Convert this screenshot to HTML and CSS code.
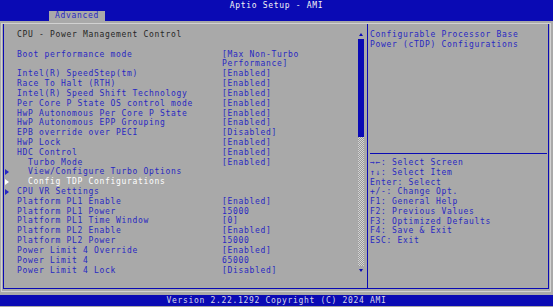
FILE: index.html
```html
<!DOCTYPE html>
<html lang="en">
<head>
    <meta charset="UTF-8">
    <title>Aptio Setup - AMI</title>
    <link rel="stylesheet" href="styles.css">
</head>
<body>
    <header class="top">
        <div class="title">Aptio Setup - AMI</div>
        <div class="tabs"><span class="tab">Advanced</span></div>
    </header>

    <div class="frame">
        <div class="inner">
            <div class="left">
                <div class="list">
                    <div class="row"><span></span><span class="heading">CPU - Power Management Control</span></div>
                    <div class="row"><span></span><span>&nbsp;</span></div>
                    <div class="row"><span></span><span>Boot performance mode</span><span>[Max Non-Turbo<br>Performance]</span></div>
                    <div class="row"><span></span><span>Intel(R) SpeedStep(tm)</span><span>[Enabled]</span></div>
                    <div class="row"><span></span><span>Race To Halt (RTH)</span><span>[Enabled]</span></div>
                    <div class="row"><span></span><span>Intel(R) Speed Shift Technology</span><span>[Enabled]</span></div>
                    <div class="row"><span></span><span>Per Core P State OS control mode</span><span>[Enabled]</span></div>
                    <div class="row"><span></span><span>HwP Autonomous Per Core P State</span><span>[Enabled]</span></div>
                    <div class="row"><span></span><span>HwP Autonomous EPP Grouping</span><span>[Enabled]</span></div>
                    <div class="row"><span></span><span>EPB override over PECI</span><span>[Disabled]</span></div>
                    <div class="row"><span></span><span>HwP Lock</span><span>[Enabled]</span></div>
                    <div class="row"><span></span><span>HDC Control</span><span>[Enabled]</span></div>
                    <div class="row"><span></span><span class="indent">Turbo Mode</span><span>[Enabled]</span></div>
                    <div class="row"><span class="arrow"></span><span class="indent">View/Configure Turbo Options</span></div>
                    <div class="row selected"><span class="arrow"></span><span class="indent">Config TDP Configurations</span></div>
                    <div class="row"><span class="arrow"></span><span>CPU VR Settings</span></div>
                    <div class="row"><span></span><span>Platform PL1 Enable</span><span>[Enabled]</span></div>
                    <div class="row"><span></span><span>Platform PL1 Power</span><span>15000</span></div>
                    <div class="row"><span></span><span>Platform PL1 Time Window</span><span>[0]</span></div>
                    <div class="row"><span></span><span>Platform PL2 Enable</span><span>[Enabled]</span></div>
                    <div class="row"><span></span><span>Platform PL2 Power</span><span>15000</span></div>
                    <div class="row"><span></span><span>Power Limit 4 Override</span><span>[Enabled]</span></div>
                    <div class="row"><span></span><span>Power Limit 4</span><span>65000</span></div>
                    <div class="row"><span></span><span>Power Limit 4 Lock</span><span>[Disabled]</span></div>
                </div>
                <div class="scroll">
                    <span class="up"></span>
                    <span class="thumb"></span>
                    <span class="track"></span>
                    <span class="down"></span>
                </div>
            </div>

            <div class="right">
                <div class="help">Configurable Processor Base<br>Power (cTDP) Configurations</div>
                <div class="rule"></div>
                <div class="keys">
                    <div>&rarr;&larr;: Select Screen</div>
                    <div>&uarr;&darr;: Select Item</div>
                    <div>Enter: Select</div>
                    <div>+/-: Change Opt.</div>
                    <div>F1: General Help</div>
                    <div>F2: Previous Values</div>
                    <div>F3: Optimized Defaults</div>
                    <div>F4: Save &amp; Exit</div>
                    <div>ESC: Exit</div>
                </div>
            </div>
        </div>
    </div>

    <footer class="bottom">Version 2.22.1292 Copyright (C) 2024 AMI</footer>
</body>
</html>
```

FILE: styles.css
```css
body {
    margin: 0;
    width: 553px;
    height: 307px;
    overflow: hidden;
    background: #a9a9a9;
    color: #2828c2;
    font-family: 'DejaVu Sans Mono', 'Liberation Mono', monospace;
    font-size: 8px;
    letter-spacing: 0.68px;
}

.top {
    height: 21px;
    background: #0a0ab4;
}

.title {
    height: 11px;
    line-height: 12px;
    text-align: center;
    color: #f4f4f4;
}

.tabs {
    height: 10px;
    padding-left: 49px;
}

.tab {
    display: inline-block;
    width: 56px;
    height: 10px;
    line-height: 10px;
    text-align: center;
    background: #a9a9a9;
    color: #2828c2;
}

.frame {
    margin: 2px 2px 0 1px;
    height: 267px;
    border: 1px solid #d2d2d2;
}

.inner {
    display: flex;
    height: 264px;
    margin: 0 1px 1px 1px;
    border: 1px solid #0a0ab4;
    border-top: none;
}

.left {
    display: flex;
    width: 363px;
    border-right: 1px solid #0a0ab4;
}

.list {
    flex: 1;
    padding-top: 6px;
    line-height: 9.82px;
}

.row {
    display: grid;
    grid-template-columns: 13px 205px 1fr;
    white-space: nowrap;
}

.heading {
    color: #262626;
}

.indent {
    padding-left: 11px;
}

.arrow {
    width: 0;
    height: 0;
    margin: 2px 0 0 1px;
    border-left: 4px solid #2828c2;
    border-top: 3px solid transparent;
    border-bottom: 3px solid transparent;
}

.selected {
    color: #ffffff;
}

.selected .arrow {
    border-left-color: #ffffff;
}

.scroll {
    display: flex;
    flex-direction: column;
    align-items: center;
    width: 6px;
    margin-right: 3px;
    padding-top: 9px;
}

.up {
    width: 0;
    height: 0;
    border-bottom: 3px solid #0a0ab4;
    border-left: 2px solid transparent;
    border-right: 2px solid transparent;
}

.thumb {
    width: 6px;
    height: 98px;
    margin-top: 3px;
    background: #0a0ab4;
}

.track {
    width: 6px;
    height: 129px;
    background: repeating-conic-gradient(#d4d4d4 0 25%, #9a9a9a 0 50%) 0 0 / 2px 2px;
}

.down {
    width: 0;
    height: 0;
    margin-top: 3px;
    border-top: 3px solid #0a0ab4;
    border-left: 2px solid transparent;
    border-right: 2px solid transparent;
}

.right {
    flex: 1;
    line-height: 9.75px;
}

.help {
    height: 123px;
    padding: 6px 0 0 2px;
}

.rule {
    height: 1px;
    margin: 0 1px 0 2px;
    background: #0a0ab4;
}

.keys {
    padding: 4px 0 0 2px;
}

.bottom {
    margin-top: 3px;
    height: 11px;
    line-height: 11px;
    text-align: center;
    background: #0a0ab4;
    color: #d8d8e8;
}
```
